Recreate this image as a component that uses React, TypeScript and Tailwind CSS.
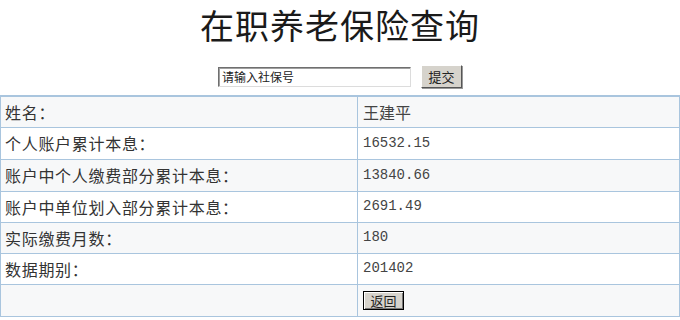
import { useState } from "react";

interface Row {
  label: string;
  value: string;
  mono: boolean;
  height: string;
}

const rows: Row[] = [
  { label: "姓名：", value: "王建平", mono: false, height: "h-[31px]" },
  { label: "个人账户累计本息：", value: "16532.15", mono: true, height: "h-[32px]" },
  { label: "账户中个人缴费部分累计本息：", value: "13840.66", mono: true, height: "h-[32px]" },
  { label: "账户中单位划入部分累计本息：", value: "2691.49", mono: true, height: "h-[31px]" },
  { label: "实际缴费月数：", value: "180", mono: true, height: "h-[31px]" },
  { label: "数据期别：", value: "201402", mono: true, height: "h-[31px]" },
];

const cjk = "font-['Noto_Sans_CJK_SC',sans-serif]";
const mono = "font-['Liberation_Mono','Noto_Sans_CJK_SC',monospace]";

export default function App() {
  const [ssn, setSsn] = useState("请输入社保号");

  return (
    <div className={`h-[320px] w-[680px] overflow-hidden bg-white ${cjk}`}>
      {/* Title */}
      <div className="flex h-[50px] items-center justify-center">
        <h1 className="text-[34px] leading-none font-normal tracking-[1px] text-[#1a1a1a]">
          在职养老保险查询
        </h1>
      </div>

      {/* Search form */}
      <div className="mt-[15px] flex h-[23px] items-center justify-center gap-[10px]">
        <input
          value={ssn}
          onChange={(e) => setSsn(e.target.value)}
          className="h-[20px] w-[193px] border border-t-[#6f6f6f] border-l-[#6f6f6f] border-r-[#dcdcdc] border-b-[#dcdcdc] bg-white px-[3px] text-[12px] text-[#222] outline-none shadow-[inset_1px_1px_0_#a0a0a0]"
        />
        <button className="h-[23px] w-[41px] border border-t-white border-l-white border-r-[#555] border-b-[#555] bg-[#d6d3cc] text-[13px] text-[#222] shadow-[1px_1px_0_#999]">
          提交
        </button>
      </div>

      {/* Result table */}
      <table className="mt-[7px] w-[680px] border-collapse border-t-2 border-t-[#a9c5de] text-[16px]">
        <tbody>
          {rows.map((row, i) => (
            <tr
              key={row.label}
              className={`${row.height} ${i % 2 === 0 ? "bg-[#f7f8f9]" : "bg-white"}`}
            >
              <td className="w-[357px] border border-[#a9c5de] pl-[4px] align-middle tracking-[0.7px] text-[#333]">
                {row.label}
              </td>
              <td
                className={`border border-[#a9c5de] pl-[5px] align-middle text-[#444] ${
                  row.mono ? `${mono} text-[14px]` : ""
                }`}
              >
                {row.value}
              </td>
            </tr>
          ))}
          <tr className="h-[32px] bg-[#f7f8f9]">
            <td className="border border-[#a9c5de]"></td>
            <td className="border border-[#a9c5de] pl-[5px] align-middle">
              <button className="flex h-[19px] w-[41px] items-center justify-center border border-black bg-[#d6d3cc] text-[13px] leading-none text-[#222] shadow-[inset_1px_1px_0_#fff,inset_-1px_-1px_0_#777]">
                返回
              </button>
            </td>
          </tr>
        </tbody>
      </table>
    </div>
  );
}
